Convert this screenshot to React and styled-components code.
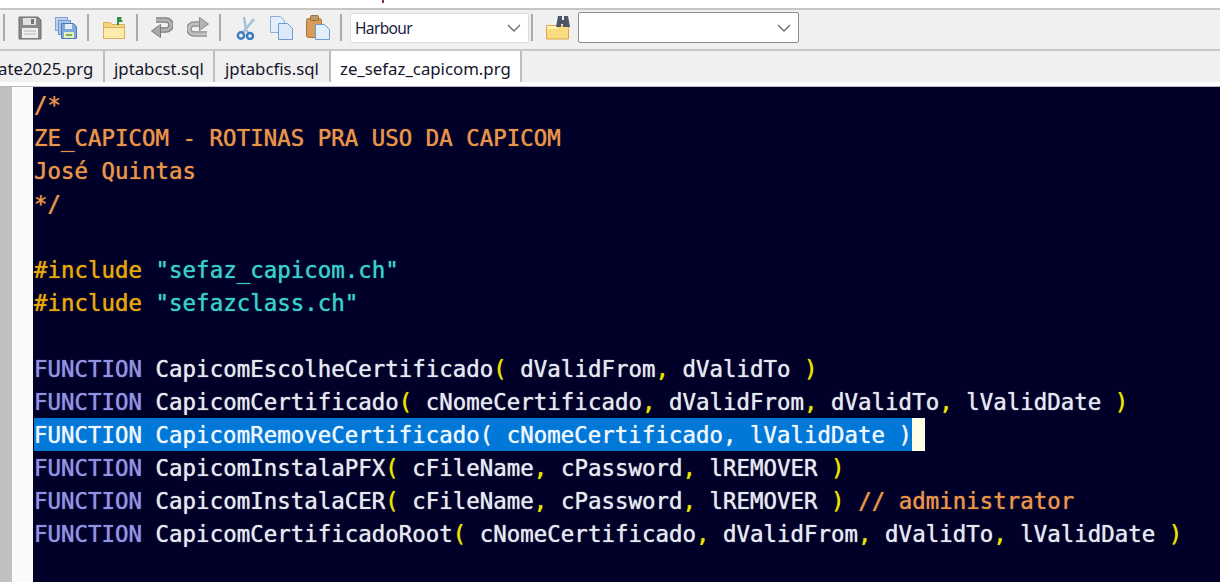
import React from 'react'
import styled, { createGlobalStyle } from 'styled-components'

const Global = createGlobalStyle`
  html, body { margin: 0; padding: 0; background: #000028; }
  body { width: 1220px; height: 582px; overflow: hidden; font-family: "Noto Sans", "Open Sans", "Liberation Sans", sans-serif; }
`

const Window = styled.div`
  width: 1220px;
  height: 582px;
  display: flex;
  flex-direction: column;
  overflow: hidden;
`

const MenuStrip = styled.div`
  height: 8px;
  flex: none;
  background: #fff;
  border-bottom: 2px solid #c6c6c6;
  overflow: hidden;
  position: relative;
`

const MenuTail = styled.span`
  position: absolute;
  left: 382px;
  top: 0;
  width: 2px;
  height: 3px;
  background: #7a3a4a;
`

const Toolbar = styled.div`
  height: 35px;
  flex: none;
  background: #f0f0f0;
  border-bottom: 2px solid #c8c8c8;
  display: flex;
  align-items: center;
  padding: 0 0 4px 3px;
  box-sizing: content-box;
`

const Sep = styled.div`
  width: 2px;
  height: 27px;
  flex: none;
  background: #ababab;
  margin-right: ${p => p.$mr}px;
  margin-left: ${p => p.$ml || 0}px;
`

const Tool = styled.div`
  width: ${p => p.$w}px;
  height: 25px;
  flex: none;
  margin-right: ${p => p.$mr}px;
  display: flex;
  align-items: center;
  justify-content: center;
`

const Combo = styled.div`
  width: ${p => p.$w}px;
  height: ${p => p.$dark ? 31 : 30}px;
  flex: none;
  box-sizing: border-box;
  background: #fff;
  border: 1px solid ${p => p.$dark ? '#8e8e8e' : '#dcdcdc'};
  border-radius: 2px;
  display: flex;
  align-items: center;
  justify-content: space-between;
  padding: 0 7px 0 4px;
  font-size: 15.5px;
  letter-spacing: -0.65px;
  color: #1b1b40;
`

const TabBar = styled.div`
  height: 31px;
  flex: none;
  background: #f0f0f0;
  display: flex;
  overflow: hidden;
`

const Tab = styled.div`
  flex: none;
  box-sizing: border-box;
  height: 31px;
  width: ${p => p.$w}px;
  padding-top: 7px;
  padding-left: ${p => p.$pl}px;
  font-size: 16.8px;
  line-height: 22px;
  color: #15152b;
  white-space: nowrap;
  overflow: hidden;
  background: ${p => p.$active ? '#fff' : '#f0f0f0'};
  border-right: 2px solid #bdbdbd;
`

const ClippedName = styled.span`
  display: block;
  margin-left: -33px;
`

const TabGap = styled.div`
  height: 5px;
  flex: none;
  background: #fff;
  border-bottom: 1px solid #b9b9c6;
  box-sizing: border-box;
`

const Body = styled.div`
  flex: 1;
  display: flex;
  min-height: 0;
`

const Bookmark = styled.div`
  width: 12px;
  flex: none;
  background: #c0c0c0;
`

const Fold = styled.div`
  width: 21px;
  flex: none;
  background: #fafafa;
`

const Editor = styled.pre`
  flex: 1;
  margin: 0;
  padding: 1px 0 0 1px;
  background: #000028;
  font-family: "DejaVu Sans Mono", "Liberation Mono", monospace;
  font-size: 22.44px;
  color: #e4e9f0;
  text-shadow: 0 0 1px;
  overflow: hidden;
`

const Line = styled.div`
  height: 33px;
  line-height: 35px;
  white-space: pre;
`

const Selected = styled.span`
  display: inline-block;
  height: 33px;
  background: #0078d7;
  color: #eef7ff;
`

const Caret = styled.span`
  display: inline-block;
  width: 13px;
  height: 33px;
  vertical-align: top;
  background: #fffde6;
`

const Comment = styled.span`color: #e8954a;`
const Keyword = styled.span`color: #9193e2;`
const Directive = styled.span`color: #e6a80c;`
const Str = styled.span`color: #36d0c8;`
const Punct = styled.span`color: #e8e400;`

const Save = () => (
  <svg width="24" height="24" viewBox="0 0 24 24">
    <path d="M1 1h19l3 3v19H1z" fill="#8a8a8a" stroke="#6e6e6e" />
    <rect x="5" y="2" width="13" height="7" fill="#e2e2e2" />
    <rect x="13" y="3" width="3" height="5" fill="#777" />
    <rect x="4" y="12" width="16" height="10" fill="#efefef" />
    <path d="M6 15h12M6 18h12" stroke="#b5b5b5" />
  </svg>
)

const SaveAll = () => (
  <svg width="22" height="22" viewBox="0 0 22 22">
    <rect x="0.5" y="0.5" width="12" height="13" fill="#bcd2ee" stroke="#7ea2d2" />
    <rect x="3.5" y="3.5" width="12" height="14" fill="#a9c6ea" stroke="#6f96cc" />
    <path d="M6.5 6.5h12l3 3v12h-15z" fill="#7ea9dc" stroke="#4a78b8" />
    <rect x="10" y="7" width="7" height="5" fill="#e4edf8" />
    <rect x="9" y="15" width="10" height="6" fill="#e2efc4" />
    <rect x="11" y="17" width="6" height="2" fill="#7db24a" />
  </svg>
)

const OpenFolder = () => (
  <svg width="22" height="23" viewBox="0 0 22 23">
    <path d="M0.5 6.5h7l2 2h12v14H0.5z" fill="#f6d67c" stroke="#dcae5a" />
    <path d="M0.5 11.5h21v11H0.5z" fill="#fcebaa" stroke="#dcae5a" />
    <path d="M14 9V1h5l-1 2 2 3h-4v3z" fill="#2f8f46" />
  </svg>
)

const Undo = () => (
  <svg width="22" height="21" viewBox="0 0 22 21" fill="none">
    <path d="M5 3h10a5 5 0 0 1 0 10H8" stroke="#7d7d7d" strokeWidth="5.4" />
    <path d="M5 3h10a5 5 0 0 1 0 10H8" stroke="#b3b3b3" strokeWidth="3" />
    <path d="M9.5 7.5L0.5 14l9 6.5z" fill="#a8a8a8" stroke="#7d7d7d" />
  </svg>
)

const Redo = () => (
  <svg width="22" height="21" viewBox="0 0 22 21" fill="none">
    <path d="M17 7H7a5 5 0 0 0 0 10h13" stroke="#8c8c8c" strokeWidth="5.4" />
    <path d="M17 7H7a5 5 0 0 0 0 10h13" stroke="#c0c0c0" strokeWidth="3" />
    <path d="M12.5 0.5L21.5 7l-9 6.5z" fill="#b4b4b4" stroke="#8c8c8c" />
  </svg>
)

const Cut = () => (
  <svg width="20" height="24" viewBox="0 0 20 24" fill="none">
    <path d="M8 1l2 13 2 3" stroke="#a4bedc" strokeWidth="2.4" />
    <path d="M18 3L9 14l-3 3" stroke="#a4bedc" strokeWidth="2.4" />
    <circle cx="5" cy="19.5" r="3.2" stroke="#3c7cc0" strokeWidth="2.4" />
    <circle cx="14" cy="20" r="3" stroke="#3c7cc0" strokeWidth="2.4" />
  </svg>
)

const Copy = () => (
  <svg width="24" height="24" viewBox="0 0 24 24">
    <path d="M0.5 0.5h10l4 4v12H0.5z" fill="#e4eefa" stroke="#8aaedb" />
    <path d="M8.5 7.5h9l5 5v11h-14z" fill="#dbe9fa" stroke="#6f9bd4" />
  </svg>
)

const Paste = () => (
  <svg width="24" height="25" viewBox="0 0 24 25">
    <rect x="0.5" y="3.5" width="15" height="19" rx="2" fill="#d69c58" stroke="#aa753c" />
    <rect x="4.5" y="0.5" width="8" height="5" rx="1" fill="#c49a62" stroke="#96703e" />
    <path d="M9.5 9.5h9l5 5v10h-14z" fill="#e2eefb" stroke="#6f9bd4" />
  </svg>
)

const FindFolder = () => (
  <svg width="24" height="25" viewBox="0 0 24 25">
    <path d="M0.5 10.5h22v13.5h-22z" fill="#f8dc80" stroke="#e4a444" />
    <path d="M1 11h9l2 3H1z" fill="#fff2bc" />
    <path d="M12 1h4v4h2V1h4l2 11h-7V9h-2v3h-5z" fill="#4c5668" />
  </svg>
)

const Chevron = () => (
  <svg width="14" height="8" viewBox="0 0 14 8" fill="none">
    <path d="M1 1l6 6 6-6" stroke="#6a6a6a" strokeWidth="1.3" />
  </svg>
)

const fn = (name, args, tail) => (
  <Line>
    <Keyword>FUNCTION</Keyword> {name}<Punct>(</Punct> {args.map((a, i) => (
      <React.Fragment key={a}>{a}{i < args.length - 1 ? <><Punct>,</Punct> </> : ' '}</React.Fragment>
    ))}<Punct>)</Punct>{tail}
  </Line>
)

export default function App() {
  return (
    <Window>
      <Global />
      <MenuStrip><MenuTail /></MenuStrip>
      <Toolbar>
        <Sep $mr={13} />
        <Tool $w={24} $mr={13}><Save /></Tool>
        <Tool $w={22} $mr={10}><SaveAll /></Tool>
        <Sep $mr={14} />
        <Tool $w={22} $mr={11}><OpenFolder /></Tool>
        <Sep $mr={13} />
        <Tool $w={22} $mr={14}><Undo /></Tool>
        <Tool $w={22} $mr={10}><Redo /></Tool>
        <Sep $mr={15} />
        <Tool $w={20} $mr={14}><Cut /></Tool>
        <Tool $w={24} $mr={12}><Copy /></Tool>
        <Tool $w={24} $mr={10}><Paste /></Tool>
        <Sep $mr={8} />
        <Combo $w={179}>Harbour<Chevron /></Combo>
        <Sep $ml={2} $mr={13} />
        <Tool $w={24} $mr={8}><FindFolder /></Tool>
        <Combo $w={221} $dark><span /><Chevron /></Combo>
      </Toolbar>
      <TabBar>
        <Tab $w={105} $pl={0}><ClippedName>update2025.prg</ClippedName></Tab>
        <Tab $w={110} $pl={9}>jptabcst.sql</Tab>
        <Tab $w={116} $pl={10}>jptabcfis.sql</Tab>
        <Tab $w={191} $pl={9} $active>ze_sefaz_capicom.prg</Tab>
      </TabBar>
      <TabGap />
      <Body>
        <Bookmark />
        <Fold />
        <Editor>
          <Line><Comment>/*</Comment></Line>
          <Line><Comment>ZE_CAPICOM - ROTINAS PRA USO DA CAPICOM</Comment></Line>
          <Line><Comment>José Quintas</Comment></Line>
          <Line><Comment>*/</Comment></Line>
          <Line> </Line>
          <Line><Directive>#include</Directive> <Str>"sefaz_capicom.ch"</Str></Line>
          <Line><Directive>#include</Directive> <Str>"sefazclass.ch"</Str></Line>
          <Line> </Line>
          {fn('CapicomEscolheCertificado', ['dValidFrom', 'dValidTo'])}
          {fn('CapicomCertificado', ['cNomeCertificado', 'dValidFrom', 'dValidTo', 'lValidDate'])}
          <Line><Selected>FUNCTION CapicomRemoveCertificado( cNomeCertificado, lValidDate )</Selected><Caret /></Line>
          {fn('CapicomInstalaPFX', ['cFileName', 'cPassword', 'lREMOVER'])}
          {fn('CapicomInstalaCER', ['cFileName', 'cPassword', 'lREMOVER'], <> <Comment>// administrator</Comment></>)}
          {fn('CapicomCertificadoRoot', ['cNomeCertificado', 'dValidFrom', 'dValidTo', 'lValidDate'])}
        </Editor>
      </Body>
    </Window>
  )
}
